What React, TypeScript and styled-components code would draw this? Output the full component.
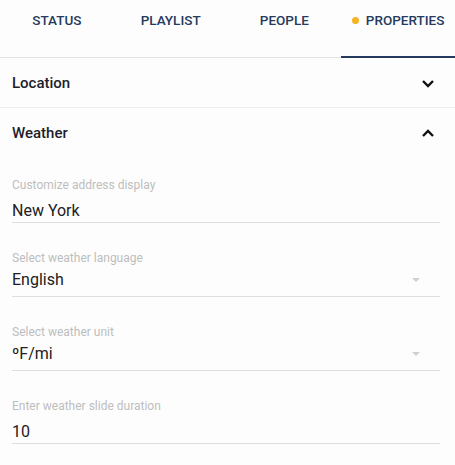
import React from "react";
import styled, { createGlobalStyle } from "styled-components";

const Global = createGlobalStyle`
  html, body { margin: 0; padding: 0; background: #fdfdfd; }
  body { font-family: Roboto, "Liberation Sans", sans-serif; -webkit-font-smoothing: antialiased; }
  * { box-sizing: border-box; }
`;

const Page = styled.div`
  width: 455px;
  min-height: 465px;
  background: #fdfdfd;
`;

const TabBar = styled.div`
  display: grid;
  grid-template-columns: repeat(4, 1fr);
  height: 58px;
  border-bottom: 1px solid #e2e2e2;
`;

const Tab = styled.div<{ $active?: boolean }>`
  position: relative;
  display: flex;
  justify-content: center;
  align-items: flex-start;
  gap: 7px;
  padding-top: 12px;
  font-size: 13.5px;
  line-height: 16px;
  font-weight: 500;
  color: #263a5e;
  &::after {
    content: "";
    display: ${(p) => (p.$active ? "block" : "none")};
    position: absolute;
    left: 0;
    right: 0;
    bottom: -1px;
    height: 2px;
    background: #253a5f;
  }
`;

const Dot = styled.span`
  width: 7px;
  height: 7px;
  border-radius: 50%;
  background: #f5b320;
  margin-top: 5px;
`;

const SectionHeader = styled.div<{ $border?: boolean }>`
  display: flex;
  align-items: center;
  justify-content: space-between;
  height: 50px;
  padding: 0 20px 0 12px;
  border-bottom: ${(p) => (p.$border ? "1px solid #eeeeee" : "none")};
  font-size: 15px;
  font-weight: 500;
  color: #1d1d2c;
`;

const Fields = styled.div`
  display: flex;
  flex-direction: column;
  gap: 28px;
  padding: 20px 15px 0 12px;
`;

const Field = styled.div`
  display: flex;
  flex-direction: column;
`;

const Label = styled.div`
  font-size: 12px;
  line-height: 14px;
  color: #bdbdbd;
`;

const Value = styled.div<{ $select?: boolean }>`
  position: relative;
  margin-top: ${(p) => (p.$select ? "5px" : "9px")};
  padding-bottom: ${(p) => (p.$select ? "6px" : "1px")};
  font-size: 16px;
  line-height: 20px;
  color: #202020;
  border-bottom: 1px solid #dedede;
`;

const Arrow = styled.span`
  position: absolute;
  right: 20px;
  top: 8px;
  width: 0;
  height: 0;
  border-left: 4.5px solid transparent;
  border-right: 4.5px solid transparent;
  border-top: 4.5px solid #d0d0d0;
`;

const Chevron = ({ up }: { up?: boolean }) => (
  <svg width="14" height="10" viewBox="0 0 14 10">
    <polyline
      points={up ? "2,8 7,3 12,8" : "2,3 7,8 12,3"}
      fill="none"
      stroke="#111"
      strokeWidth="2.4"
    />
  </svg>
);

const fields = [
  { label: "Customize address display", value: "New York" },
  { label: "Select weather language", value: "English", select: true },
  { label: "Select weather unit", value: "ºF/mi", select: true },
  { label: "Enter weather slide duration", value: "10" },
];

export default function App() {
  return (
    <Page>
      <Global />
      <TabBar>
        <Tab>STATUS</Tab>
        <Tab>PLAYLIST</Tab>
        <Tab>PEOPLE</Tab>
        <Tab $active>
          <Dot />
          PROPERTIES
        </Tab>
      </TabBar>
      <SectionHeader $border>
        Location
        <Chevron />
      </SectionHeader>
      <SectionHeader>
        Weather
        <Chevron up />
      </SectionHeader>
      <Fields>
        {fields.map((f) => (
          <Field key={f.label}>
            <Label>{f.label}</Label>
            <Value $select={f.select}>
              {f.value}
              {f.select && <Arrow />}
            </Value>
          </Field>
        ))}
      </Fields>
    </Page>
  );
}
